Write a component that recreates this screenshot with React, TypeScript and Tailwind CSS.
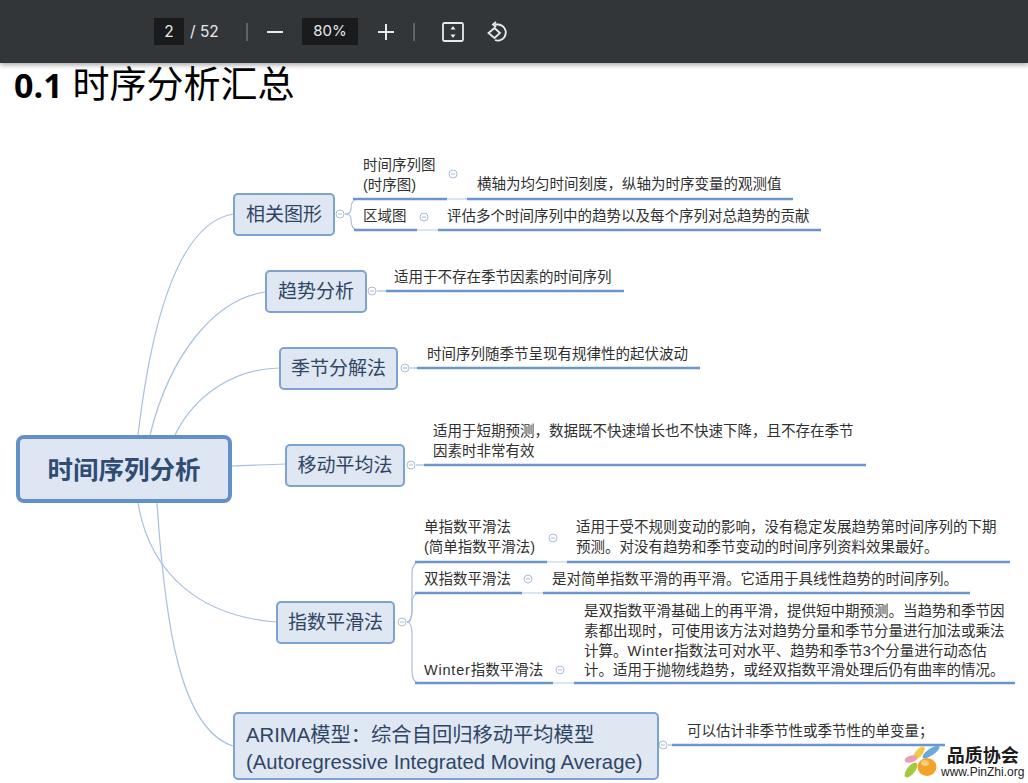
import React from "react";

const CJK = "font-['Liberation_Sans','Noto_Sans_CJK_SC',sans-serif]";

function Node({ className, children }: { className: string; children: React.ReactNode }) {
  return (
    <div className={`absolute flex items-center justify-center rounded-[5px] border-2 border-[#7fa3d1] bg-[#dfe7f3] text-[19px] leading-none text-[#2f4564] ${className}`}>
      {children}
    </div>
  );
}

function Label({ className, children }: { className: string; children: React.ReactNode }) {
  return <div className={`absolute whitespace-nowrap pt-px text-[14.5px] leading-[19.8px] text-[#303030] ${className}`}>{children}</div>;
}

function Win() {
  return <span className="tracking-[0.8px]">Winter</span>;
}

const circles: [number, number][] = [
  [340, 150], [372, 227], [405, 304], [411, 401], [402, 558], [663, 681],
  [453, 110], [424, 153], [553, 474], [528, 515], [560, 606],
];

const lines: [number, number, number][] = [
  [353, 447, 135], [467, 793, 135], [354, 417, 166], [438, 821, 166],
  [386, 624, 227], [417, 700, 304], [424, 866, 401],
  [415, 547, 498], [567, 1010, 498], [415, 522, 529], [543, 970, 529],
  [415, 553, 619], [574, 1015, 619], [672, 945, 681],
];

const thin: [number, number, number][] = [
  [447, 467, 135], [417, 438, 166], [547, 567, 498], [522, 543, 529], [553, 574, 619],
];

function Connectors() {
  return (
    <svg className="absolute left-0 top-0" width="1028" height="719" fill="none">
      <g stroke="#a9c0de" strokeWidth="1.2">
        <path d="M138 371 C150 270 175 160 233 150" />
        <path d="M150 371 C170 290 215 235 265 228" />
        <path d="M175 371 C195 330 235 305 279 304" />
        <path d="M232 402 C250 401 265 401 285 400" />
        <path d="M138 439 C150 510 200 552 276 558" />
        <path d="M157 439 C165 560 180 665 233 682" />
        <path d="M345 150 C349 150 351 148 351 145 C351 139 353 135 358 135" />
        <path d="M345 150 C349 150 351 152 351 155 C351 161 353 166 358 166" />
        <path d="M407 558 C411 558 412 552 412 545 V510 C412 503 414 498 420 498" />
        <path d="M407 558 C411 558 412 552 412 545 V540 C412 533 414 529 420 529" />
        <path d="M407 558 C411 558 412 564 412 571 V607 C412 614 414 619 420 619" />
        <path d="M377 227 H386" />
        <path d="M410 304 H417" />
        <path d="M416 401 H424" />
        <path d="M668 681 H672" />
        {thin.map(([a, b, y]) => <path key={a} d={`M${a} ${y} H${b}`} stroke="#c5d5e8" />)}
      </g>
      <g stroke="#6c95ca" strokeWidth="2.6">
        {lines.map(([a, b, y]) => <path key={a} d={`M${a} ${y} H${b}`} />)}
      </g>
      <g stroke="#a9bdd6" strokeWidth="1" fill="#ffffff">
        {circles.map(([x, y]) => (
          <g key={x}>
            <circle cx={x} cy={y} r="4" />
            <path d={`M${x - 2} ${y} H${x + 2}`} />
          </g>
        ))}
      </g>
    </svg>
  );
}

function WatermarkIcon() {
  return (
    <svg width="37" height="35" viewBox="0 0 37 35">
      <ellipse cx="23" cy="22" rx="9.5" ry="9" fill="#f2a428" />
      <ellipse cx="21" cy="18" rx="4" ry="3" fill="#f8cf7a" />
      <ellipse cx="15" cy="8" rx="3.5" ry="8" transform="rotate(40 15 8)" fill="#f5c944" />
      <ellipse cx="27" cy="7" rx="3.5" ry="10" transform="rotate(55 27 7)" fill="#69a9dc" />
      <ellipse cx="7" cy="14" rx="6.5" ry="3.4" transform="rotate(-15 7 14)" fill="#ea9cb8" />
      <ellipse cx="7" cy="25" rx="4" ry="9" transform="rotate(38 7 25)" fill="#a5c83c" />
    </svg>
  );
}

export default function App() {
  return (
    <div className={`flex h-[783px] w-[1028px] flex-col overflow-hidden bg-white ${CJK}`}>
      <header className="relative z-10 flex h-[63px] shrink-0 items-center bg-[#323639] pl-[154px] text-[15.5px] text-[#e8eaed] shadow-[0_2px_5px_rgba(0,0,0,0.35)] font-['Inter',sans-serif]">
        <div className="flex h-[27px] w-[30px] items-center justify-center bg-[#191b1c]">2</div>
        <span className="ml-[6px] w-[30px] whitespace-nowrap">/ 52</span>
        <div className="ml-[26px] h-[18px] w-[2px] bg-[#5f6368]" />
        <svg className="ml-[19px]" width="16" height="16" viewBox="0 0 16 16" fill="none" stroke="#e8eaed" strokeWidth="2"><path d="M0 8H16" /></svg>
        <div className="ml-[19px] flex h-[27px] w-[56px] items-center justify-center bg-[#191b1c] text-[15px]">80%</div>
        <svg className="ml-[20px]" width="16" height="16" viewBox="0 0 16 16" fill="none" stroke="#e8eaed" strokeWidth="2"><path d="M0 8H16M8 0V16" /></svg>
        <div className="ml-[19px] h-[18px] w-[2px] bg-[#5f6368]" />
        <svg className="ml-[27px]" width="22" height="20" viewBox="0 0 22 20" fill="none" stroke="#e8eaed" strokeWidth="1.8">
          <rect x="1" y="1" width="20" height="18" rx="1.5" />
          <path d="M11 4L8.5 7.5H13.5Z M11 16L8.5 12.5H13.5Z" fill="#e8eaed" stroke="none" />
        </svg>
        <svg className="ml-[23px]" width="22" height="22" viewBox="0 0 22 22" fill="none" stroke="#e8eaed" strokeWidth="1.8">
          <path d="M8 3.5 H11 A8 8 0 1 1 8 19" />
          <path d="M9 1L6 3.5L9 6" />
          <path d="M7.5 7L1.5 12L7.5 17L13 12Z" />
        </svg>
      </header>

      <main className="relative mt-px flex-1">
        <h1 className="absolute left-[14px] top-[-4px] flex items-baseline whitespace-nowrap text-[37px] leading-[44px] text-black">
          <span className="text-[34px] font-bold font-['Open_Sans',sans-serif]">0.1</span>
          <span className="ml-[10px] font-['Noto_Sans_CJK_SC',sans-serif]">时序分析汇总</span>
        </h1>

        <Connectors />

        <div className="absolute left-[16px] top-[371px] flex h-[68px] w-[216px] items-center justify-center rounded-[8px] border-4 border-[#6291c9] bg-[#dde6f2] pt-[3px] text-[25.5px] font-bold text-[#2f4c74]">
          时间序列分析
        </div>
        <Node className="left-[233px] top-[129px] h-[43px] w-[102px]">相关图形</Node>
        <Node className="left-[265px] top-[206px] h-[43px] w-[102px]">趋势分析</Node>
        <Node className="left-[279px] top-[283px] h-[43px] w-[119px]">季节分解法</Node>
        <Node className="left-[285px] top-[380px] h-[43px] w-[120px]">移动平均法</Node>
        <Node className="left-[276px] top-[537px] h-[43px] w-[119px]">指数平滑法</Node>
        <div className="absolute left-[233px] top-[648px] h-[68px] w-[426px] rounded-[5px] border-2 border-[#7fa3d1] bg-[#dfe7f3] pl-[11px] pt-[8px] text-[20.3px] leading-[27px] text-[#2f4564]">
          <div className="whitespace-nowrap">ARIMA模型：综合自回归移动平均模型</div>
          <div className="whitespace-nowrap">(Autoregressive Integrated Moving Average)</div>
        </div>

        <Label className="left-[363px] top-[91px]">时间序列图<br />(时序图)</Label>
        <Label className="left-[477px] top-[110px]">横轴为均匀时间刻度，纵轴为时序变量的观测值</Label>
        <Label className="left-[363px] top-[142px]">区域图</Label>
        <Label className="left-[447px] top-[142px]">评估多个时间序列中的趋势以及每个序列对总趋势的贡献</Label>
        <Label className="left-[394px] top-[203px]">适用于不存在季节因素的时间序列</Label>
        <Label className="left-[427px] top-[280px]">时间序列随季节呈现有规律性的起伏波动</Label>
        <Label className="left-[433px] top-[357px]">适用于短期预测，数据既不快速增长也不快速下降，且不存在季节<br />因素时非常有效</Label>
        <Label className="left-[424px] top-[453px]">单指数平滑法<br />(简单指数平滑法)</Label>
        <Label className="left-[576px] top-[453px]">适用于受不规则变动的影响，没有稳定发展趋势第时间序列的下期<br />预测。对没有趋势和季节变动的时间序列资料效果最好。</Label>
        <Label className="left-[424px] top-[505px]">双指数平滑法</Label>
        <Label className="left-[552px] top-[505px]">是对简单指数平滑的再平滑。它适用于具线性趋势的时间序列。</Label>
        <Label className="left-[584px] top-[537px]">是双指数平滑基础上的再平滑，提供短中期预测。当趋势和季节因<br />素都出现时，可使用该方法对趋势分量和季节分量进行加法或乘法<br />计算。<Win />指数法可对水平、趋势和季节3个分量进行动态估<br />计。适用于抛物线趋势，或经双指数平滑处理后仍有曲率的情况。</Label>
        <Label className="left-[424px] top-[596px]"><Win />指数平滑法</Label>
        <Label className="left-[687px] top-[657px]">可以估计非季节性或季节性的单变量；</Label>

        <div className="absolute left-[904px] top-[681px] flex items-start">
          <WatermarkIcon />
          <div className="flex flex-col items-center pt-[1px]">
            <span className="text-[18px] font-bold leading-[20px] text-[#1c1c1c]">品质协会</span>
            <span className="text-[12px] leading-[13px] text-[#222222]">www.PinZhi.org</span>
          </div>
        </div>
      </main>
    </div>
  );
}
